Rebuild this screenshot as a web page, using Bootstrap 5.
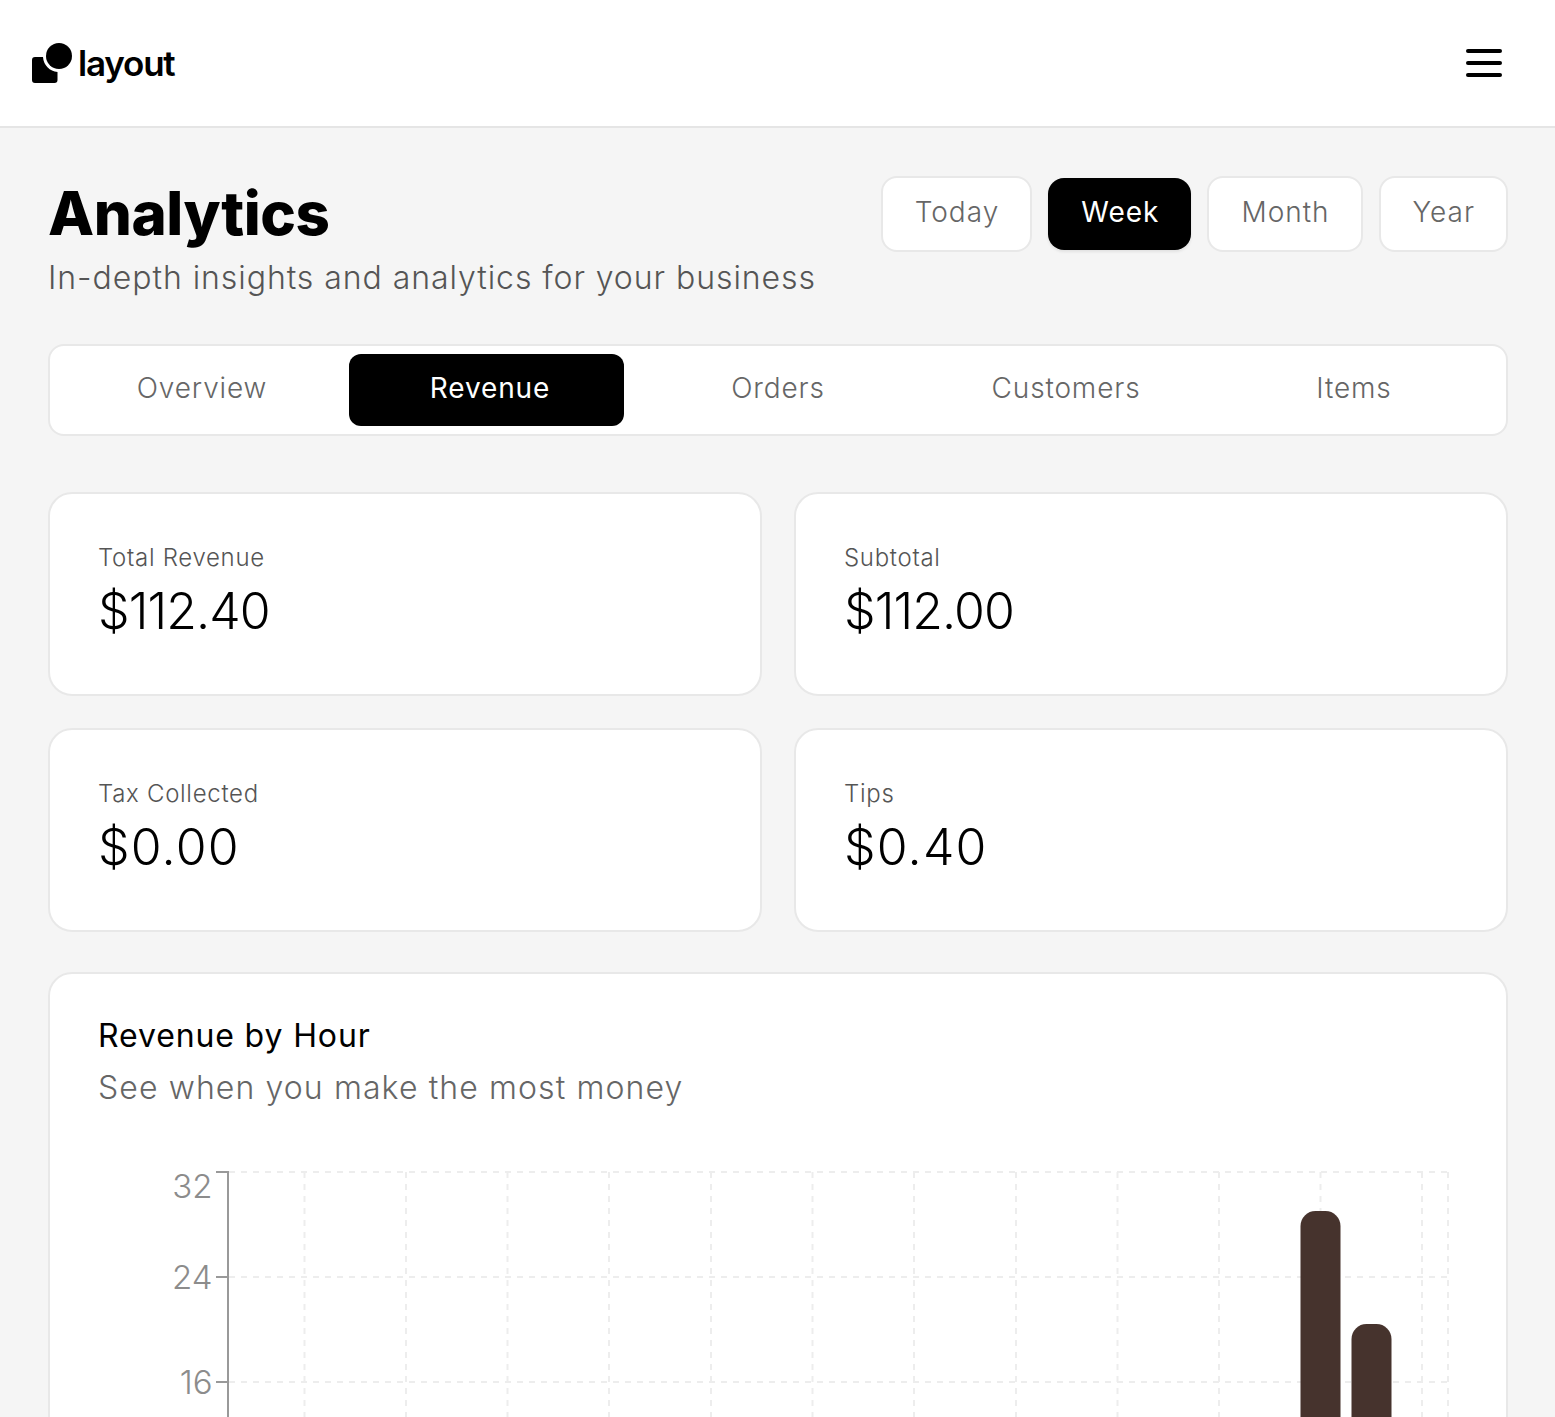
<!doctype html>
<html lang="en"><head><meta charset="utf-8"><title>Analytics</title>
<link href="https://cdn.jsdelivr.net/npm/bootstrap@5.3.0/dist/css/bootstrap.min.css" rel="stylesheet">
<style>
html,body{height:1417px;overflow:hidden}
body{background:#f5f5f5;font-family:Inter,"Liberation Sans",sans-serif;color:#000}
.topbar{height:128px;background:#fff;border-bottom:2px solid #e5e5e5;padding:0 53px 0 32px}
.brand-name{font-family:Inter,sans-serif;font-weight:600;font-size:35px;letter-spacing:-1.2px;line-height:1;color:#000;margin-left:4px}
.menu-btn{width:36px;height:28px;border:0;background:none;padding:0}
.menu-btn span{display:block;height:4px;background:#000;border-radius:2px}
.page{padding:48px 47px 0 48px}
.head-row{height:168px}
.page-title{font-weight:800;font-size:60px;line-height:72px;margin:0;letter-spacing:-.45px;padding-top:1px}
.page-sub{font-weight:300;font-size:32px;line-height:44px;color:#555;letter-spacing:.94px;margin:7px 0 0}
.range-btn{height:76px;border:2px solid #e8e8e8;border-radius:16px;background:#fff;color:#666;font-weight:300;font-size:28px;letter-spacing:1px;padding:0 31px 4px 32px}
.range-btn.on{background:#000;color:#fff;border:0;height:72px;margin:2px 0;padding:0 32px 4px 33px;font-weight:400;box-shadow:0 2px 3px rgba(0,0,0,.08)}
.tab-bar{height:92px;border:2px solid #e8e8e8;border-radius:16px;background:#fff;padding:8px}
.tab-cell{flex:0 0 288px}
.tab-item{width:275px;height:72px;margin-left:3px;padding:0 0 4px 7px;border:0;border-radius:12px;background:none;color:#666;font-weight:300;font-size:28px;letter-spacing:.85px}
.tab-item.on{background:#000;color:#fff;font-weight:400}
.stat-grid{display:grid;grid-template-columns:714px 714px;gap:32px;margin-top:56px}
.stat-box{height:204px;border:2px solid #e8e8e8;border-radius:24px;background:#fff;padding:48px}
.stat-label{font-weight:300;font-size:24px;line-height:32px;color:#555;letter-spacing:.7px}
.stat-value{font-weight:300;font-size:50px;line-height:66px;letter-spacing:1.2px;margin-top:4px}
.stat-value.narrow{letter-spacing:-.9px}
.chart-box{margin-top:40px;width:1460px;height:600px;border:2px solid #e8e8e8;border-radius:24px;background:#fff;padding:40px 48px 0}
.chart-title{font-weight:400;font-size:32px;line-height:44px;letter-spacing:.87px;margin:0}
.chart-sub{font-weight:300;font-size:32px;line-height:44px;color:#666;letter-spacing:1.1px;margin:8px 0 0}
.chart-svg{display:block;margin:40px 0 0 -48px}
.chart-svg text{font-weight:300;font-size:33px;fill:#8c8c8c}
</style></head><body>
<nav class="topbar d-flex align-items-center justify-content-between">
  <a class="d-flex align-items-center text-decoration-none" href="#">
    <svg width="42" height="42" viewBox="0 0 42 42" aria-hidden="true"><path d="M3 15h8a16 16 0 0 0 14.500 15V38a3 3 0 0 1-3 3H3a3 3 0 0 1-3-3V18a3 3 0 0 1 3-3z" fill="#000"/><circle cx="27" cy="14" r="13" fill="#000"/></svg>
    <span class="brand-name">layout</span>
  </a>
  <button class="menu-btn d-flex flex-column justify-content-between" aria-label="Menu"><span></span><span></span><span></span></button>
</nav>
<main class="page">
  <div class="head-row d-flex justify-content-between align-items-start">
    <div><h1 class="page-title">Analytics</h1><p class="page-sub">In-depth insights and analytics for your business</p></div>
    <div class="d-flex gap-3">
      <button class="range-btn">Today</button><button class="range-btn on">Week</button><button class="range-btn">Month</button><button class="range-btn">Year</button>
    </div>
  </div>
  <div class="tab-bar d-flex">
    <div class="tab-cell"><button class="tab-item">Overview</button></div>
    <div class="tab-cell"><button class="tab-item on">Revenue</button></div>
    <div class="tab-cell"><button class="tab-item">Orders</button></div>
    <div class="tab-cell"><button class="tab-item">Customers</button></div>
    <div class="tab-cell"><button class="tab-item">Items</button></div>
  </div>
  <div class="stat-grid">
    <div class="stat-box"><div class="stat-label">Total Revenue</div><div class="stat-value narrow">$112.40</div></div>
    <div class="stat-box"><div class="stat-label">Subtotal</div><div class="stat-value narrow">$112.00</div></div>
    <div class="stat-box"><div class="stat-label">Tax Collected</div><div class="stat-value">$0.00</div></div>
    <div class="stat-box"><div class="stat-label">Tips</div><div class="stat-value">$0.40</div></div>
  </div>
  <section class="chart-box">
    <h2 class="chart-title">Revenue by Hour</h2>
    <p class="chart-sub">See when you make the most money</p>
    <svg class="chart-svg" width="1456" height="300" viewBox="50 1150 1456 300" aria-label="Revenue by hour chart">
      <g stroke="#ededed" stroke-width="2" stroke-dasharray="6 6" fill="none">
        <path d="M229 1172H1448M229 1277H1448M229 1382H1448"/>
        <path d="M304.500 1172V1450M406 1172V1450M507.500 1172V1450M609 1172V1450M711 1172V1450M812.500 1172V1450M914 1172V1450M1016 1172V1450M1117.500 1172V1450M1219 1172V1450M1320.500 1172V1450M1422 1172V1450M1448 1172V1450"/>
      </g>
      <path d="M216 1172H228V1450M216 1277H228M216 1382H228" fill="none" stroke="#999" stroke-width="2"/>
      <text x="212.500" y="1198" text-anchor="end">32</text>
      <text x="212.500" y="1289" text-anchor="end">24</text>
      <text x="212.500" y="1394" text-anchor="end">16</text>
      <rect x="1300.500" y="1211" width="40" height="260" rx="15" fill="#46332d"/>
      <rect x="1351.500" y="1324" width="40" height="150" rx="15" fill="#46332d"/>
    </svg>
  </section>
</main>
<script src="https://cdn.jsdelivr.net/npm/bootstrap@5.3.0/dist/js/bootstrap.bundle.min.js"></script>
</body></html>
